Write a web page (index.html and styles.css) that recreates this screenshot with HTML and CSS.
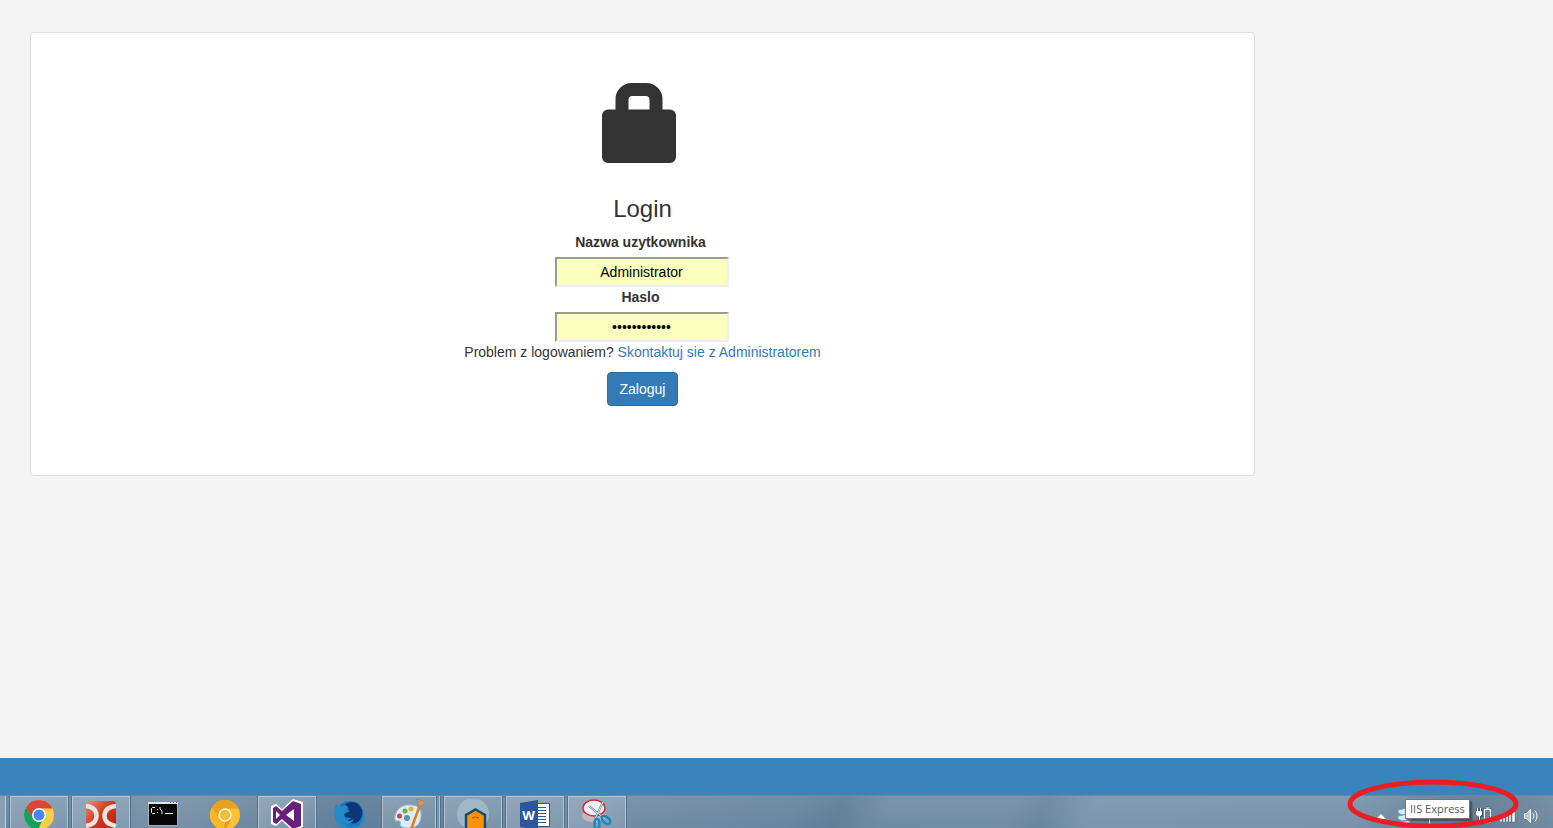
FILE: index.html
```html
<!DOCTYPE html>
<html lang="pl">
<head>
<meta charset="utf-8">
<title>Login</title>
<link rel="stylesheet" href="styles.css">
</head>
<body>
<main class="page">
  <form class="panel">
    <svg class="lock" viewBox="0 0 74 80" aria-hidden="true"><path fill="#333" fill-rule="evenodd" d="M6 26.500H13.500V16A16 16 0 0 1 29.500 0H44.500A16 16 0 0 1 60.500 16V26.500H68A6 6 0 0 1 74 32.500V74A6 6 0 0 1 68 80H6A6 6 0 0 1 0 74V32.500A6 6 0 0 1 6 26.500ZM26.500 26.500H47.500V17Q47.500 13 43.500 13H30.500Q26.500 13 26.500 17Z"/></svg>
    <h3 class="title">Login</h3>
    <label class="label" for="user">Nazwa uzytkownika</label>
    <input class="field" id="user" type="text" value="Administrator">
    <label class="label" for="pass">Haslo</label>
    <input class="field" id="pass" type="password" value="abcdefghijkl">
    <p class="help">Problem z logowaniem? <a class="link" href="#">Skontaktuj sie z Administratorem</a></p>
    <button class="submit" type="submit">Zaloguj</button>
  </form>
</main>
<footer class="footer">
  <div class="band"></div>
  <div class="taskbar">
    <div class="apps">
      <span class="sliver"></span>
      <button class="app open" type="button" aria-label="Chrome"><svg class="icon" viewBox="0 0 32 32"><circle cx="16" cy="16" r="15" fill="#fdcc43"/><path fill="#dc4437" d="M3 8.500A15 15 0 0 1 29.500 9.500H16L9.500 20Z"/><path fill="#16a05d" d="M3 8.500L10 20Q13 24 19 22L15 31A15 15 0 0 1 3 8.500Z"/><circle cx="16" cy="16" r="7" fill="#fff"/><circle cx="16" cy="16" r="5.500" fill="#4687f4"/></svg></button>
      <button class="app open" type="button" aria-label="DC"><svg class="icon" viewBox="0 0 32 32"><defs><linearGradient id="red" x2="1" y2="1"><stop stop-color="#e69077"/><stop offset=".45" stop-color="#cf3b20"/><stop offset="1" stop-color="#b51c07"/></linearGradient></defs><rect x="1" y="2" width="30" height="32" rx="3" fill="url(#red)"/><path d="M1 7Q11 8 11.500 16.500T1 27M31 7Q20 8 19.500 16.500T31 27" fill="none" stroke="#e5e3e3" stroke-width="4.500"/></svg></button>
      <button class="app" type="button" aria-label="Command prompt"><svg class="icon" viewBox="0 0 32 32"><path fill="#050505" stroke="#a9b0b5" d="M1.500 3.500H30.500V26.500H1.500Z"/><path fill="#e4e4e4" d="M1 3H31V5H1Z"/><path fill="#555" d="M23 3h1v1h-1zM26 3h1v1h-1zM29 3h1v1h-1z"/><path d="M8 8.500H5.500L4.500 9.500V13.500L5.500 14.500H8M10 10.500H11M10 13.500H11M13 8V10L15 12V15M18 14.500H26" fill="none" stroke="#fff"/></svg></button>
      <button class="app" type="button" aria-label="Chrome Canary"><svg class="icon" viewBox="0 0 32 32"><circle cx="16" cy="16" r="15" fill="#fbc334"/><path fill="#eda01d" d="M3 8.500A15 15 0 0 1 29.500 9.500H16L10 20Z"/><path fill="#fcb823" d="M3 8.500L10 20Q13 24 19 22L15 31A15 15 0 0 1 3 8.500Z"/><path fill="#e39b23" d="M16 23L23 17L17 31H15Z"/><circle cx="16" cy="16" r="6" fill="#f4bb45" stroke="#fff4cf" stroke-width="1.500"/></svg></button>
      <button class="app open" type="button" aria-label="Visual Studio"><svg class="icon" viewBox="0 0 32 32"><path fill="#fff" d="M22 0L32 3V28L22 32L11 22L5 27L0 25V7L5 5L11 10Z"/><path fill="#68217a" fill-rule="evenodd" d="M22 2L30 5V27L22 30L11 20L5 25L2 23V9L5 7L11 12ZM5 12V20L9 16ZM23 10L15 16L23 22Z"/></svg></button>
      <button class="app" type="button" aria-label="Firefox Developer"><svg class="icon" viewBox="0 0 32 32"><circle cx="17" cy="16" r="14" fill="#1479bd"/><path fill="#0b3675" d="M12 5Q21 0 27 7Q32 15 26 22Q20 27 14 22L19 19L12 18L11 13L16 10Z"/><path fill="#2489c6" d="M3 5Q6 8 10 7L15 7L13 10L17 12L11 15Q10 21 17 22L21 20Q17 28 10 23Q17 32 25 26Q31 22 30 10Q35 23 25 29Q12 35 4 24Q-1 15 3 5Z"/></svg></button>
      <button class="app open stacked" type="button" aria-label="Paint"><svg class="icon" viewBox="0 0 32 32"><path fill="#d9eef8" stroke="#9dc5dc" d="M2 17Q5 5 18 6Q29 7 28 17Q27 29 16 29Q7 29 7 25Q9 21 3 22Q1 20 2 17Z"/><circle cx="14" cy="19" r="3" fill="#668ca8"/><circle cx="6.500" cy="17" r="2.500" fill="#d9433c"/><circle cx="12" cy="12" r="2.500" fill="#57b64c"/><circle cx="18" cy="10" r="2.500" fill="#efb21d"/><path fill="#e57b20" d="M26 5L28 7L20 29L16 32Z"/><path fill="#c99b72" stroke="#956b48" stroke-width=".5" d="M24 0L33 3L29 7L25 6Z"/></svg></button>
      <button class="app open" type="button" aria-label="Home app"><svg class="icon" viewBox="0 0 32 32"><circle cx="16" cy="15" r="16" fill="#a0b6c7"/><path fill="#ff9000" stroke="#154c70" stroke-width="2.500" d="M9 34V16L18.500 10.500L28 16V29L24 34Z"/><path d="M15 19Q18.500 17 22 19" fill="none" stroke="#895729"/></svg></button>
      <button class="app open" type="button" aria-label="Word"><svg class="icon" viewBox="0 0 32 32"><path fill="#fff" stroke="#2b579a" d="M17 4.500H30.500V27.500H17Z"/><path d="M19 8.500H27M19 11.500H27M19 14.500H27M19 17.500H27M19 20.500H27M19 23.500H27" stroke="#2b579a"/><path fill="#2b579a" d="M1 4L19 1V31L1 28Z"/><text class="word-letter" x="9.500" y="21" text-anchor="middle">W</text></svg></button>
      <button class="app open" type="button" aria-label="Snipping tool"><svg class="icon" viewBox="0 0 32 32"><ellipse cx="13" cy="17" rx="12" ry="6" fill="#c3b9c4" stroke="#d3a8ad"/><ellipse cx="13" cy="9" rx="11" ry="8" fill="#edf1f5" stroke="#cc3038" stroke-width="1.500"/><path d="M22 3L14 20M8 7L24 20" stroke="#617888" stroke-width="2"/><path d="M22 3L14 20M8 7L24 20" stroke="#dce5ea"/><ellipse cx="16" cy="25" rx="2.500" ry="5" fill="none" stroke="#1687c7" stroke-width="2.500"/><ellipse cx="25" cy="21" rx="5" ry="3" transform="rotate(40 25 21)" fill="none" stroke="#1687c7" stroke-width="2.500"/></svg></button>
    </div>
    <div class="tray">
      <svg class="tray-icons" viewBox="0 0 166 24" aria-hidden="true">
        <path fill="#fff" d="M3 14L8 9L13 14Z"/>
        <path fill="#d8edf7" stroke="#6e9fbd" d="M25 5L34 3L39 5V8L29 10L25 8ZM25 11L34 9L39 11V14L29 16L25 14ZM27 17L37 15V19L30 20Z"/>
        <path d="M56.500 5V20M57 6H65V12H57" fill="none" stroke="#fff"/>
        <g fill="none" stroke="#3e5569" stroke-width="3"><path d="M104.500 3V6M107.500 3V6M103 6.500H109V10L106.500 12V18H110M111.500 4.500H117.500V17.500H111.500ZM113 3H116"/></g>
        <g fill="none" stroke="#fff"><path d="M104.500 3V6M107.500 3V6M106.500 11V17.500H110"/><path fill="#fff" d="M103.500 6.500H108.500V9.500L106.500 11.500L103.500 9.500Z"/><path stroke-width="1.500" d="M111.500 4.500H117.500V17.500H111.500Z"/><path d="M113 3H116"/></g>
        <path fill="#fff" stroke="#4d6070" stroke-width=".5" d="M127 13h2v4h-2zM130 11h2v6h-2zM133 9h2v8h-2zM136 7h2v10h-2zM139 4h3v13h-3z"/>
        <path fill="#b9c8d4" stroke="#fff" d="M151.500 8.500H154L157.500 4.500V17.500L154 13.500H151.500Z"/>
        <path d="M160 8Q162 11 160 14M162 5.500Q166 11 162 16.500" fill="none" stroke="#fff"/>
      </svg>
      <span class="tooltip" role="tooltip">IIS Express</span>
    </div>
  </div>
  <svg class="mark" viewBox="0 0 172 50" aria-hidden="true"><ellipse cx="86" cy="25" rx="83" ry="22" fill="none" stroke="#ed1c24" stroke-width="5"/></svg>
</footer>
</body>
</html>
```
FILE: styles.css
```css
* { box-sizing: border-box; }
body {
  margin: 0;
  height: 100vh;
  display: flex;
  flex-direction: column;
  overflow: hidden;
  background: #f4f4f4;
  color: #333;
  font: 14px/20px "Liberation Sans", Arial, sans-serif;
}
.page { flex: 1; padding: 32px 298px 32px 30px; }
.panel {
  display: flex;
  flex-direction: column;
  align-items: center;
  padding: 50px 16px 69px;
  background: #fff;
  border: 1px solid #ddd;
  border-radius: 4px;
}
.lock { width: 74px; height: 80px; margin-right: 7px; }
.title { margin: 33px 0 10px; font-size: 24px; line-height: 26px; font-weight: 400; }
.label { margin: 0 4px 5px 0; font-weight: 700; }
.field {
  width: 174px;
  height: 30px;
  margin-right: 2px;
  padding: 1px 2px;
  border: 2px solid;
  border-color: #9a9a9a #eee #eee #9a9a9a;
  background: #faffbd;
  color: #000;
  font: inherit;
  text-align: center;
}
.help { margin: 0 0 10px; }
.link { color: #337ab7; text-decoration: none; }
.submit {
  padding: 6px 12px;
  border: 1px solid #2e6da4;
  border-radius: 4px;
  background: #337ab7;
  color: #fff;
  font: inherit;
}
.footer { position: relative; }
.band { height: 37px; background: #3984ba; }
.taskbar {
  display: flex;
  justify-content: space-between;
  height: 33px;
  overflow: hidden;
  border-top: 1px solid #6686a3;
  background:
    linear-gradient(180deg, #ffffff12, #ffffff00),
    linear-gradient(115deg, #6685a0 0%, #7891a8 12%, #5f7d98 23%, #728da6 39%, #6885a0 51%, #607d97 54%, #708ca5 57%, #718ca5 65%, #69859e 67%, #7a95ae 70%, #7893ab 87%, #607a92 94%, #718ba2 100%);
}
.apps { display: flex; gap: 4px; }
.sliver { width: 6px; background: #879eb3; border-right: 1px solid #c1ceda; }
.app {
  display: flex;
  align-items: flex-start;
  justify-content: center;
  width: 58px;
  height: 44px;
  padding: 3px 0 0;
  border: 0;
  background: none;
}
.open {
  border: 1px solid #b5c4d1;
  padding-top: 2px;
  outline: 1px solid #536e87;
  background: linear-gradient(135deg, #ffffff38, #ffffff18);
}
.stacked { width: 54px; margin-right: 4px; box-shadow: 3px 0 #7891a7, 4px 0 #b5c4d1, 5px 0 #536e87; }
.icon { flex: none; width: 32px; height: 32px; }
.word-letter { fill: #fff; font: 700 13px "Open Sans", sans-serif; }
.tray { position: relative; padding: 9px 14px 0 0; }
.tray-icons { display: block; width: 166px; height: 24px; }
.tooltip {
  position: absolute;
  top: 3px;
  left: 32px;
  padding: 0 4px;
  border: 1px solid #767676;
  background: #fff;
  color: #575757;
  font: 11px/18px "Open Sans", sans-serif;
  white-space: nowrap;
  box-shadow: 2px 2px 2px #0006;
}
.mark { position: absolute; right: 34px; top: 21px; width: 172px; height: 50px; pointer-events: none; }
```
